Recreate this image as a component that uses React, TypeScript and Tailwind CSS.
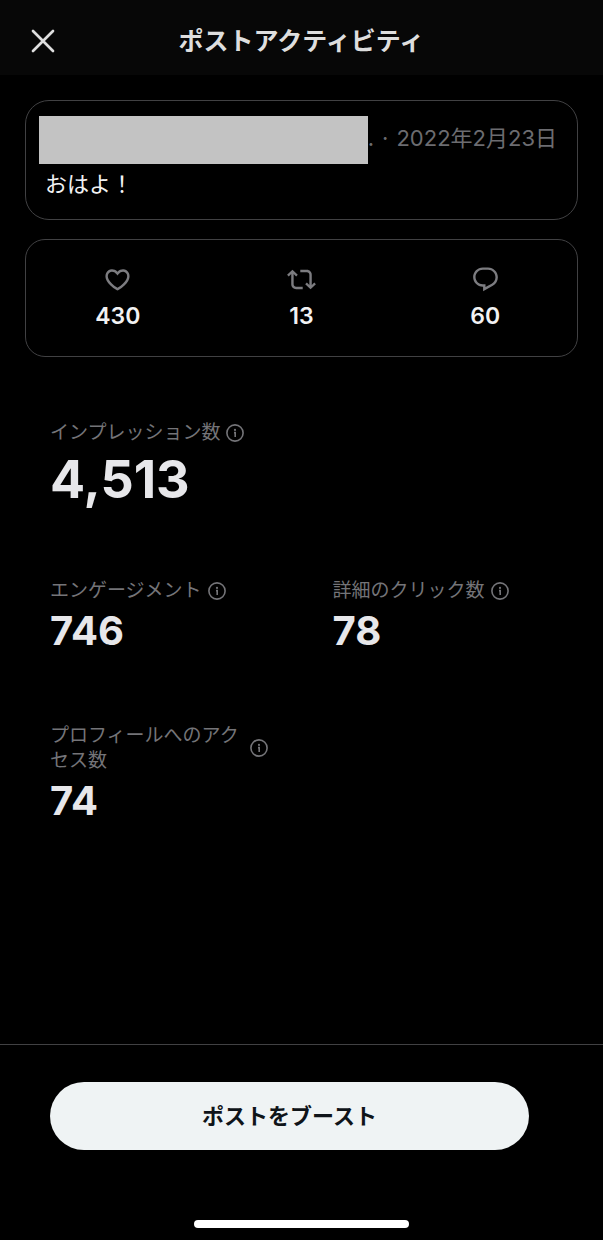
import type { ReactNode } from "react";

const CloseIcon = () => (
  <svg viewBox="0 0 24 24" className="size-6" fill="none" stroke="currentColor" strokeWidth="2.7" strokeLinecap="round">
    <path d="M2 2l20 20M22 2L2 22" />
  </svg>
);

const HeartIcon = () => (
  <svg viewBox="0 0 24 24" className="size-[29px]" fill="currentColor">
    <path d="M16.697 5.5c-1.222-.06-2.679.51-3.89 2.16l-.805 1.09-.806-1.09C9.984 6.01 8.526 5.44 7.304 5.5c-1.243.07-2.349.78-2.91 1.91-.552 1.12-.633 2.78.479 4.82 1.074 1.97 3.257 4.27 7.129 6.61 3.87-2.34 6.052-4.64 7.126-6.61 1.111-2.04 1.03-3.7.477-4.82-.561-1.13-1.666-1.84-2.908-1.91zm4.187 7.69c-1.351 2.48-4.001 5.12-8.379 7.67l-.503.3-.504-.3c-4.379-2.55-7.029-5.19-8.382-7.67-1.36-2.5-1.41-4.86-.514-6.67.887-1.79 2.647-2.91 4.601-3.01 1.651-.09 3.368.56 4.798 2.01 1.429-1.45 3.146-2.1 4.796-2.01 1.954.1 3.714 1.22 4.601 3.01.896 1.81.846 4.17-.514 6.67z" />
  </svg>
);

const RepostIcon = () => (
  <svg viewBox="0 0 24 24" className="size-[29px]" fill="currentColor">
    <path d="M4.5 3.88l4.432 4.14-1.364 1.46L5.5 7.55V16c0 1.1.896 2 2 2H13v2H7.5c-2.209 0-4-1.79-4-4V7.55L1.432 9.48.068 8.02 4.5 3.88zM16.5 6H11V4h5.5c2.209 0 4 1.79 4 4v8.45l2.068-1.93 1.364 1.46-4.432 4.14-4.432-4.14 1.364-1.46 2.068 1.93V8c0-1.1-.896-2-2-2z" />
  </svg>
);

const ReplyIcon = () => (
  <svg viewBox="0 0 24 24" className="size-[29px]" fill="currentColor">
    <path d="M1.751 10c0-4.42 3.584-8 8.005-8h4.366c4.49 0 8.129 3.64 8.129 8.13 0 2.96-1.607 5.68-4.196 7.11l-8.054 4.46v-3.69h-.067c-4.49.1-8.183-3.51-8.183-8.01zm8.005-6c-3.317 0-6.005 2.69-6.005 6 0 3.37 2.77 6.08 6.138 6.01l.351-.01h1.761v2.3l5.087-2.81c1.951-1.08 3.163-3.13 3.163-5.36 0-3.39-2.744-6.13-6.129-6.13H9.756z" />
  </svg>
);

const InfoIcon = () => (
  <svg viewBox="0 0 18 18" className="size-[18px]" fill="none" stroke="currentColor" strokeWidth="1.6">
    <circle cx="9" cy="9" r="8.1" />
    <path d="M8 8.6h1.2v4.4" />
    <circle cx="9" cy="5.9" r="1.1" fill="currentColor" stroke="none" />
  </svg>
);

const Count = ({ icon, value }: { icon: ReactNode; value: string }) => (
  <div className="flex flex-col items-center gap-2 text-[#7c7c80]">
    {icon}
    <span className="text-[23px] leading-7 font-semibold text-[#f2f2f3]">{value}</span>
  </div>
);

const Metric = ({ label, value, large }: { label: string; value: string; large?: boolean }) => (
  <div>
    <div className="flex items-center gap-1.5 text-[#747478]">
      <h2 className="max-w-[194px] text-[19px] leading-[25px]">{label}</h2>
      <button type="button" aria-label={`${label}について`} className="shrink-0">
        <InfoIcon />
      </button>
    </div>
    <p
      className={
        large
          ? "mt-1 text-[52px] leading-[61px] font-bold text-[#e7e7ea]"
          : "mt-1 text-[40px] leading-[48px] font-bold text-[#e7e7ea]"
      }
    >
      {value}
    </p>
  </div>
);

export default function App() {
  return (
    <div className="flex min-h-screen flex-col bg-black font-[Inter,'Noto_Sans_CJK_JP',sans-serif]" lang="ja">
      <header className="grid h-[75px] grid-cols-[1fr_auto_1fr] items-center bg-[#070707] pt-[7px] text-[#dedede]">
        <button type="button" aria-label="閉じる" className="ml-[31px] justify-self-start">
          <CloseIcon />
        </button>
        <h1 className="text-[25px] leading-8 font-bold">ポストアクティビティ</h1>
      </header>

      <main className="flex-1 px-[25px] pt-[25px]">
        <article className="rounded-[24px] border border-[#414143] px-[13px] pt-[15px] pb-[19px]">
          <div className="flex">
            <div className="h-12 flex-1 bg-[#c3c3c3]" />
            <p className="flex gap-2 pt-1.5 pr-[7px] text-[22px] leading-8 text-[#6c6c70]">
              <span>.</span>
              <span>·</span>
              <time dateTime="2022-02-23">2022年2月23日</time>
            </p>
          </div>
          <p className="mt-1 pl-1.5 text-[22px] leading-8 text-[#f2f2f3]">おはよ！</p>
        </article>

        <section className="mt-[19px] grid grid-cols-3 rounded-[20px] border border-[#414143] pt-[25px] pb-[26px]">
          <Count icon={<HeartIcon />} value="430" />
          <Count icon={<RepostIcon />} value="13" />
          <Count icon={<ReplyIcon />} value="60" />
        </section>

        <section className="grid grid-cols-2 gap-x-[62px] gap-y-[68px] px-[25px] pt-[63px]">
          <div className="col-span-2">
            <Metric label="インプレッション数" value="4,513" large />
          </div>
          <Metric label="エンゲージメント" value="746" />
          <Metric label="詳細のクリック数" value="78" />
          <Metric label="プロフィールへのアクセス数" value="74" />
        </section>
      </main>

      <footer className="border-t border-[#414143] pt-[37px] pb-3">
        <div className="pr-[74px] pl-[50px]">
          <button
            type="button"
            className="h-[68px] w-full rounded-full bg-[#eff3f4] text-[22px] leading-8 font-bold text-[#0f1419]"
          >
            ポストをブースト
          </button>
        </div>
        <div className="mx-auto mt-[70px] h-2 w-[215px] rounded-full bg-white" />
      </footer>
    </div>
  );
}
